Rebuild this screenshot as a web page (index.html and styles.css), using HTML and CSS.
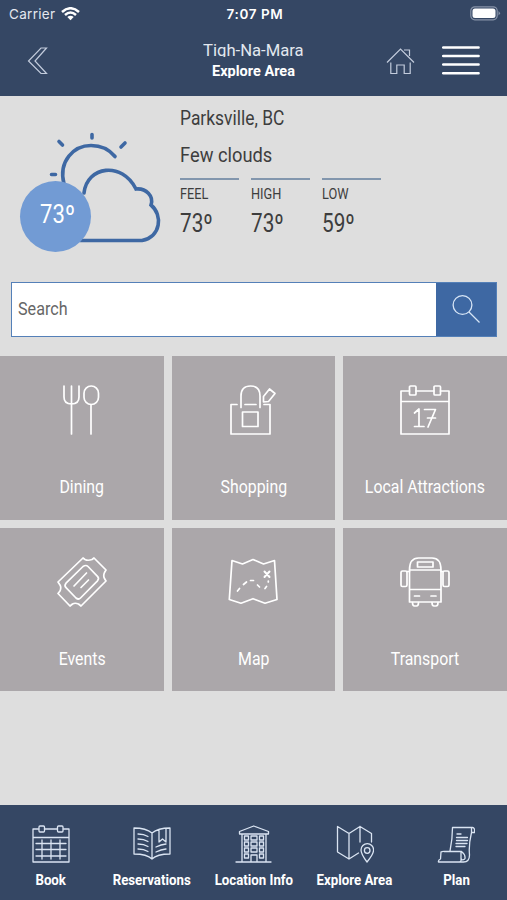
FILE: index.html
```
<!DOCTYPE html>
<html lang="en">
<head>
<meta charset="utf-8">
<title>Explore Area</title>
<link rel="stylesheet" href="styles.css">
</head>
<body>
<div class="app">
  <header class="header">
    <div class="status">
      <div class="carrier"><span>Carrier</span>
        <svg width="19" height="14" viewBox="0 0 19 14"><path d="M1 5Q9.500-2.500 18 5M4 8Q9.500 3 15 8" fill="none" stroke="#fff" stroke-width="2.500"/><path d="M6.300 10Q9.500 7.400 12.700 10L9.500 13.300Z" fill="#fff"/></svg>
      </div>
      <div class="time">7:07 PM</div>
      <svg class="battery" width="31" height="15" viewBox="0 0 31 15"><rect x=".8" y=".8" width="26.400" height="13" rx="4" fill="none" stroke="#8793a8" stroke-width="1.200"/><rect x="2.500" y="2.500" width="23" height="9.600" rx="2.500" fill="#fff"/><path d="M28.500 5v4.500q3-2.200 0-4.500" fill="#8793a8"/></svg>
    </div>
    <div class="nav">
      <svg class="back" width="22" height="30" viewBox="0 0 22 30"><path d="M14 2h5.500L8 15l11.500 12.500H14L1.500 15Z" fill="none" stroke="#c3ccdc" stroke-width="1.200"/></svg>
      <div class="title">
        <div class="brand"><span class="t">Tigh-Na-Mara</span></div>
        <div class="page"><span class="t">Explore Area</span></div>
      </div>
      <div class="actions">
        <svg width="29" height="28" viewBox="0 0 29 28"><path d="M1 15.500 14.500 2 28 15.500M18 3h5.500v6M4.800 15.500v11h6v-8.500h7.400v8.500h6v-11" fill="none" stroke="#c3ccdc" stroke-width="1.200"/></svg>
        <svg width="38" height="31" viewBox="0 0 38 31"><path d="M1.200 2.600h35.400M1.200 11h35.400M1.200 19.600h35.400M1.200 28.200h35.400" stroke="#fff" stroke-width="2.500" stroke-linecap="round"/></svg>
      </div>
    </div>
  </header>

  <main class="main">
    <section class="weather">
      <div class="sky">
        <svg width="150" height="130" viewBox="15 126 150 130"><g fill="none" stroke="#3e68a3" stroke-width="3.600" stroke-linecap="round"><path d="M64 184C58 161 74 145.500 91 145.500Q106 145.500 115 156.500"/><path d="M92 134.500v3.500M59 141.500l3.500 3.500M125 143l-4 4M51.500 174.500h4"/><path d="M84 193C87 166 122 161 136 189C146 188 154 196 151 205C163 215 161 237 142 240.500H80"/></g></svg>
        <div class="badge"><span class="t">73º</span></div>
      </div>
      <div class="report">
        <div class="place"><span class="t">Parksville, BC</span></div>
        <div class="cond"><span class="t">Few clouds</span></div>
        <div class="temps">
          <div class="temp"><div class="lbl"><span class="t">FEEL</span></div><div class="deg"><span class="t">73º</span></div></div>
          <div class="temp"><div class="lbl"><span class="t">HIGH</span></div><div class="deg"><span class="t">73º</span></div></div>
          <div class="temp"><div class="lbl"><span class="t">LOW</span></div><div class="deg"><span class="t">59º</span></div></div>
        </div>
      </div>
    </section>

    <div class="search">
      <div class="field"><span class="t">Search</span></div>
      <div class="go"><svg width="30" height="30" viewBox="0 0 30 30"><g fill="none" stroke="#d7e5f6" stroke-width="1.300"><circle cx="11.500" cy="11" r="9.400"/><path d="m18 18 10.500 10.500"/></g></svg></div>
    </div>

    <section class="tiles">
      <div class="tile"><svg class="icon" viewBox="0 0 50 50"><path d="M7 1v11q0 7 7.500 7t7.500-7V1M14.500 1v48M34 19.500V49"/><rect x="27" y="1" width="14.500" height="18.500" rx="7.200"/></svg><div class="name"><span class="t">Dining</span></div></div>
      <div class="tile"><svg class="icon" viewBox="0 0 50 50"><path d="M9 19.500H3V49h39V19.500h-6M17 19.500h11M13 22.500V11q0-10 9.500-10T32 11v11.500"/><rect x="14.500" y="27" width="15.500" height="14.500"/><path d="m35.500 11.500 6-7.500 5.500 4.500-6.500 8-5 .5Z"/></svg><div class="name"><span class="t">Shopping</span></div></div>
      <div class="tile"><svg class="icon" viewBox="0 0 50 50"><path d="M9.500 6H1v43h48V6h-8.500M16 6h18M1 16.500h48"/><rect x="9.500" y="1" width="6.500" height="9" rx="1"/><rect x="34" y="1" width="6.500" height="9" rx="1"/><path d="m14.500 28 4.500-4V41M14.500 41.500H24M24.500 24.500h11L28 42M27.500 33h8"/></svg><div class="name"><span class="t">Local Attractions</span></div></div>
      <div class="tile"><svg class="icon" viewBox="0 0 50 50"><path d="m26 1 2 1.500q3 1.500 7 0L37 1l12 12-1.500 2.500q-1.500 3.500 0 6L49 24 24 49l-2.500-2q-3.500-1.500-6 0L13 49 1 36.500l2-2.500q1.500-3.500 0-6L1 25Z"/><path d="M26 9.500q3-2 5 0l9.500 9.800q2 2 0 4.500L23.500 41q-2 2-4.500 0L9 30.700q-2-2 0-4.500ZM17 29l12.500-13M24 30.500l7.500-7.500"/></svg><div class="name"><span class="t">Events</span></div></div>
      <div class="tile"><svg class="icon" viewBox="0 0 50 50"><path d="M4 3.500 14.500 7 25 2.500 35.500 7 46.500 3.500l2.500 39-12 3.700-12-4.500-12 4.500L1.300 42.500Z"/><path d="m9.500 34 2-2.500M15.500 27.500l3-2.500M22.500 23.500h3M29.500 28l2 2M37 31.500l1.500-2M40.300 25v-1"/><path d="m36.500 14.500 5 5.500m0-5.500L36.500 20" stroke-width="2"/></svg><div class="name"><span class="t">Map</span></div></div>
      <div class="tile"><svg class="icon" viewBox="0 0 50 50"><path d="M9.500 13q0-12 9-12H32q9 0 9 12v32h-31.500ZM9.500 13H41M9.500 32.500H41M14.500 39h5M31 39h5"/><rect x="17.500" y="5" width="15.500" height="5"/><rect x="1" y="14" width="6" height="15.500" rx="1.500"/><rect x="43" y="14" width="6" height="15.500" rx="1.500"/><path d="M7 14.500h2.500M41 14.500h2M12.500 45.500q0 3.500 2 3.500h2q2 0 2-3.500M32 45.500q0 3.500 2 3.500h2q2 0 2-3.500"/></svg><div class="name"><span class="t">Transport</span></div></div>
    </section>
  </main>

  <footer class="tabs">
    <div class="tab"><svg viewBox="0 0 38 38"><path d="M6.500 4H1v33h36V4h-5.500M12.500 4h13M1 12.500h36M4 18.500h30M4 24.500h30M4 31h30M10 15v19M19 15v19M28 15v19"/><rect x="7" y="1" width="5.500" height="6" rx="1"/><rect x="25.500" y="1" width="5.500" height="6" rx="1"/></svg><div class="tabname"><span class="t">Book</span></div></div>
    <div class="tab"><svg viewBox="0 0 38 38"><path d="M19 8Q13 3 1 3v26q13 0 18 5 5-5 18-5V3Q25 3 19 8v26M5 9q6 0 10 2.500M5 14q6 0 10 2.500M5 19q6 0 10 2.500M5 24q6 0 10 2.500M23 22q5-2.500 10-3M23 27q5-2.500 10-3M26 5v12l3.500-3 3.500 3V4"/></svg><div class="tabname"><span class="t">Reservations</span></div></div>
    <div class="tab"><svg viewBox="0 0 38 38"><path d="M2 37h35M8 37V9.500M32 37V9.500M5.500 9V6.500L19.700 1 34.500 6.500V9ZM17 37v-7h6v7"/><path d="M10.500 11h4v4h-4zM17 11h6v4h-6zM25.500 11h4v4h-4zM10.500 17h4v4h-4zM17 17h6v4h-6zM25.500 17h4v4h-4zM10.500 23h4v4h-4zM17 23h6v4h-6zM25.500 23h4v4h-4zM10.500 29h4v4h-4zM25.500 29h4v4h-4z"/></svg><div class="tabname"><span class="t">Location Info</span></div></div>
    <div class="tab"><svg viewBox="0 0 38 38"><path d="M22.500 28 13 34 1.500 27V1.500L13 8.500l11-7 11.500 7V17M13 8.500V34M24 1.500V17"/><path d="M31 37q-6-8-6-12a6.300 6.300 0 0 1 12.600 0q0 4-6.600 12Z"/><circle cx="31.200" cy="25.500" r="2.800"/></svg><div class="tabname"><span class="t">Explore Area</span></div></div>
    <div class="tab"><svg viewBox="0 0 38 38"><path d="M13 26q2.500-12 2.500-23.500h20q2.500 0 2 5H34.500V3M34.500 7.500Q31.500 20 32.500 30q0 7-6 7H2M4 27q2-1 3-.500h17v8q3 1 4-1 .5-4-3.500-7M4 27l-.5 7q-2.500 1-2 3H22.500q2-1 2-3"/><path d="M20 9h4M19.500 12.500h11M19.500 15.500h11M19 18.500h11M19 21.500h9"/></svg><div class="tabname"><span class="t">Plan</span></div></div>
  </footer>
</div>
</body>
</html>
```
FILE: styles.css
```
* { box-sizing: border-box; }
body { margin: 0; background: #dedede; color: #3d3d3d; font-family: Roboto, sans-serif; }
svg { display: block; flex: none; }
.app { width: 507px; height: 900px; display: flex; flex-direction: column; overflow: hidden; }
.t { display: inline-block; white-space: nowrap; transform: scaleX(.85); transform-origin: left center; }

.header { height: 96px; background: #354764; color: #fff; flex: none; }
.status { height: 28px; padding: 0 6px 0 9px; display: grid; grid-template-columns: 1fr auto 1fr; align-items: center; font-family: Inter, sans-serif; }
.carrier { display: flex; gap: 6px; align-items: center; font-size: 13.500px; color: #e4e8ef; letter-spacing: .3px; }
.time { font-size: 13.500px; font-weight: 600; letter-spacing: .6px; }
.battery { justify-self: end; margin-top: -1px; }
.nav { height: 68px; display: grid; grid-template-columns: 1fr auto 1fr; align-items: start; padding: 0 27px; }
.back { margin-top: 18px; }
.title { text-align: center; padding-top: 14px; }
.title .t, .name .t, .tabname .t, .badge .t { transform-origin: center; }
.brand { padding: 0 8px; font-size: 16px; line-height: 18px; height: 14.500px; overflow: hidden; color: #e2e7ef; }
.brand .t { transform: scaleX(1.040); }
.page { font-size: 14.500px; line-height: 18px; height: 15.500px; margin-top: 6px; overflow: hidden; font-weight: 700; }
.page .t { transform: scaleX(1); }
.actions { display: flex; gap: 27px; justify-content: flex-end; padding-top: 17px; align-items: center; }

.main { flex: 1; }
.weather { height: 186px; display: flex; }
.sky { width: 180px; padding: 30px 0 0 15px; position: relative; }
.badge { position: absolute; left: 20px; top: 85px; width: 71px; height: 71px; border-radius: 50%; background: #729bd4; color: #fff; font-size: 26px; line-height: 67px; text-align: center; padding-left: 4px; }
.report { padding-top: 8px; }
.place, .cond { font-size: 20px; line-height: 28px; }
.place .t { transform: scaleX(.870); }
.cond .t { transform: scaleX(.915); }
.cond { margin-top: 9px; }
.temps { display: flex; gap: 12px; margin-top: 9px; }
.temp { width: 59px; border-top: 2.500px solid #8296ad; }
.lbl { font-size: 14.500px; line-height: 20px; margin-top: 5px; }
.lbl .t { transform: scaleX(.880); }
.deg { font-size: 25px; line-height: 34px; margin-top: 2px; }
.deg .t { transform: scaleX(.830); }

.search { margin: 0 10px 0 11px; height: 54.500px; display: flex; border: 1.500px solid #5480b8; background: #fff; }
.field { flex: 1; font-size: 19px; line-height: 51px; padding-left: 6px; color: #666; }
.go { width: 60px; background: #3e68a3; display: flex; align-items: center; justify-content: center; }

.tiles { margin-top: 19.900px; display: grid; grid-template-columns: repeat(3, 1fr); grid-auto-rows: 163.500px; gap: 8px; }
.tile { background: #aba7aa; color: #fff; display: flex; flex-direction: column; align-items: center; padding-top: 29px; }
.icon { width: 50px; height: 50px; fill: none; stroke: #fff; stroke-width: 1.700; stroke-linejoin: round; stroke-linecap: round; }
.name { font-size: 19px; line-height: 28px; margin-top: 37.700px; }
.name .t { transform: scaleX(.835); }

.tabs { height: 95px; background: #354764; color: #fff; display: grid; grid-template-columns: repeat(5, 1fr); flex: none; padding-top: 20px; }
.tab { display: flex; flex-direction: column; align-items: center; min-width: 0; }
.tab svg { width: 38px; height: 38px; fill: none; stroke: #dae4f2; stroke-width: 1.300; stroke-linejoin: round; stroke-linecap: round; }
.tabname { font-size: 14.500px; font-weight: 700; line-height: 20px; margin-top: 8px; }
.tabname .t { transform: scaleX(.915); }
```
